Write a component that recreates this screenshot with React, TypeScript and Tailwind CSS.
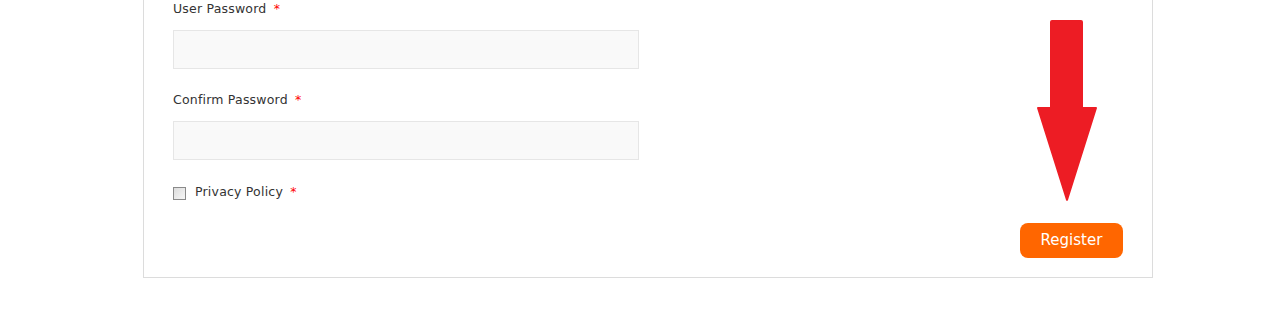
import React from 'react';

function Label({ text }: { text: string }) {
  return (
    <label className="block text-[12.5px] leading-[18px] tracking-[0.2px] text-[#333]">
      {text} <span className="ml-[3px] text-[#ff0000]">*</span>
    </label>
  );
}

function DownArrow() {
  return (
    <svg
      className="absolute left-[1036px] top-[19px]"
      width="62"
      height="184"
      viewBox="0 0 62 184"
    >
      <path
        d="M16 1 H45 Q47 1 47 3 V88 H60 Q61 88 61 89 L32 181 Q31 183 30 181 L1 89 Q1 88 2 88 H14 V3 Q14 1 16 1 Z"
        fill="#ed1c24"
      />
    </svg>
  );
}

export default function App() {
  return (
    <div className="relative h-[328px] w-[1280px] bg-white font-['DejaVu_Sans',Verdana,sans-serif]">
      <div className="ml-[143px] w-[1010px] border-x border-b border-[#dcdcdc] px-[29px] pb-[19px]">
        <div className="flex flex-col">
          <Label text="User Password" />
          <input
            type="password"
            className="mt-[12px] h-[39px] w-[466px] border border-[#e6e6e6] bg-[#f9f9f9] outline-none"
          />

          <div className="mt-[22px]">
            <Label text="Confirm Password" />
          </div>
          <input
            type="password"
            className="mt-[12px] h-[39px] w-[466px] border border-[#e6e6e6] bg-[#f9f9f9] outline-none"
          />

          <div className="mt-[23px] flex items-center gap-[9px]">
            <span className="mt-[2px] block h-[13px] w-[13px] border border-[#8a8a8a] bg-gradient-to-br from-[#dcdcdc] to-[#f7f7f7]" />
            <span className="text-[12.5px] leading-[18px] tracking-[0.2px] text-[#333]">
              Privacy Policy <span className="ml-[3px] text-[#ff0000]">*</span>
            </span>
          </div>

          <div className="mt-[22px] flex justify-end">
            <button className="h-[35px] w-[103px] rounded-[8px] bg-[#ff6600] text-[15px] text-white">
              Register
            </button>
          </div>
        </div>
      </div>
      <DownArrow />
    </div>
  );
}
